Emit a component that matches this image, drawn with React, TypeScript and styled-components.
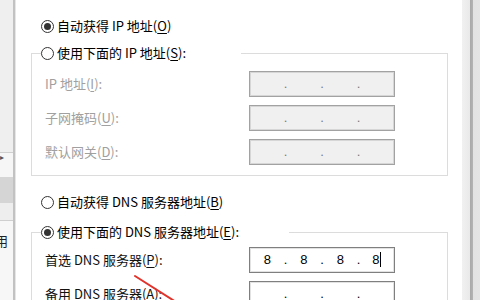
import React from "react";
import styled, { createGlobalStyle } from "styled-components";

const GlobalStyle = createGlobalStyle`
  html, body {
    margin: 0;
    padding: 0;
    background: #ffffff;
  }
  body {
    font-family: "Noto Sans CJK SC", "Microsoft YaHei", sans-serif;
    font-size: 13px;
    color: #000;
  }
`;

type Octets = [string, string, string, string];

type IpFieldProps = {
  value?: Octets;
  disabled?: boolean;
  focused?: boolean;
};

function IpField({ value, disabled, focused }: IpFieldProps) {
  const parts: Octets = value ?? ["", "", "", ""];
  return (
    <ScIpBox $disabled={disabled}>
      {parts.map((part, i) => (
        <React.Fragment key={i}>
          {i > 0 && <ScDot $disabled={disabled}>.</ScDot>}
          <ScOctet>
            {part}
            {focused && i === 3 && <ScCaret />}
          </ScOctet>
        </React.Fragment>
      ))}
    </ScIpBox>
  );
}

type RadioProps = {
  checked?: boolean;
  width?: number;
  children: React.ReactNode;
};

function Radio({ checked, width, children }: RadioProps) {
  return (
    <ScRadioRow $width={width}>
      <ScRadioCircle $checked={checked} />
      <span>{children}</span>
    </ScRadioRow>
  );
}

export default function App() {
  return (
    <>
      <GlobalStyle />
      <ScWindow>
        <ScLeftStrip>
          <ScStripBlock $height={152} />
          <ScStripLine />
          <ScStripArrow>▸</ScStripArrow>
          <ScStripBlock $height={14} $tone="#f6f6f6" />
          <ScStripBlock $height={26} $tone="#d5d5d5" />
          <ScStripBlock $height={17} $tone="#eeeeee" />
          <ScStripLine />
          <ScStripText>用</ScStripText>
        </ScLeftStrip>

        <ScMain>
          <ScStandalone>
            <Radio checked>
              自动获得 IP 地址(<u>O</u>)
            </Radio>
          </ScStandalone>

          <ScGroup $gap={7}>
            <ScLegend>
              <Radio width={200}>
                使用下面的 IP 地址(<u>S</u>):
              </Radio>
            </ScLegend>
            <ScGrid $padTop={8} $padBottom={10}>
              <ScLabel $disabled>
                IP 地址(<u>I</u>):
              </ScLabel>
              <IpField disabled />
              <ScLabel $disabled>
                子网掩码(<u>U</u>):
              </ScLabel>
              <IpField disabled />
              <ScLabel $disabled>
                默认网关(<u>D</u>):
              </ScLabel>
              <IpField disabled />
            </ScGrid>
          </ScGroup>

          <ScStandalone $gap={16}>
            <Radio>
              自动获得 DNS 服务器地址(<u>B</u>)
            </Radio>
          </ScStandalone>

          <ScGroup $gap={10}>
            <ScLegend>
              <Radio checked width={248}>
                使用下面的 DNS 服务器地址(<u>E</u>):
              </Radio>
            </ScLegend>
            <ScGrid $padTop={5} $padBottom={10}>
              <ScLabel>
                首选 DNS 服务器(<u>P</u>):
              </ScLabel>
              <IpField value={["8", "8", "8", "8"]} focused />
              <ScLabel>
                备用 DNS 服务器(<u>A</u>):
              </ScLabel>
              <IpField />
            </ScGrid>
          </ScGroup>
        </ScMain>

        <ScRightStrip />

        <ScAnnotation viewBox="0 0 480 300" width="480" height="300">
          <line
            x1="135"
            y1="276"
            x2="176"
            y2="302"
            stroke="#e2332b"
            strokeWidth="2"
            strokeLinecap="round"
          />
        </ScAnnotation>
      </ScWindow>
    </>
  );
}

const ScWindow = styled.div`
  position: relative;
  display: flex;
  width: 480px;
  height: 300px;
  overflow: hidden;
  background: #fff;
`;

const ScLeftStrip = styled.div`
  flex: none;
  width: 13px;
  display: flex;
  flex-direction: column;
  background: #f7f7f7;
  border-right: 2px solid #c2c2c2;
  box-shadow: 1px 0 0 #e6e6e6;
  overflow: hidden;
`;

const ScStripBlock = styled.div<{ $height: number; $tone?: string }>`
  flex: none;
  height: ${(p) => p.$height}px;
  background: ${(p) => p.$tone ?? "#efefef"};
`;

const ScStripLine = styled.div`
  flex: none;
  height: 1px;
  background: #cfcfcf;
`;

const ScStripArrow = styled.div`
  height: 10px;
  line-height: 10px;
  font-size: 8px;
  color: #555;
  background: #f6f6f6;
  font-family: "DejaVu Sans", sans-serif;
`;

const ScStripText = styled.div`
  margin: 12px 0 0 -5px;
  font-size: 13px;
  line-height: 16px;
  color: #222;
`;

const ScMain = styled.div`
  flex: 1;
  display: flex;
  flex-direction: column;
  padding: 16px 14px 0 16px;
  min-width: 0;
`;

const ScStandalone = styled.div<{ $gap?: number }>`
  margin-top: ${(p) => p.$gap ?? 0}px;
  padding-left: 10px;
`;

const ScRadioRow = styled.label<{ $width?: number }>`
  display: flex;
  align-items: center;
  gap: 3px;
  height: 20px;
  width: ${(p) => (p.$width ? `${p.$width}px` : "auto")};
  white-space: nowrap;
  line-height: 20px;
  color: #000;

  u {
    text-underline-offset: 2px;
  }
`;

const ScRadioCircle = styled.span<{ $checked?: boolean }>`
  flex: none;
  box-sizing: border-box;
  width: 13px;
  height: 13px;
  border: 1px solid #333;
  border-radius: 50%;
  background: #fff;
  display: flex;
  align-items: center;
  justify-content: center;

  &::after {
    content: "";
    width: 7px;
    height: 7px;
    border-radius: 50%;
    background: #333;
    display: ${(p) => (p.$checked ? "block" : "none")};
  }
`;

const ScGroup = styled.fieldset<{ $gap: number }>`
  margin: ${(p) => p.$gap}px 0 0 0;
  padding: 0;
  min-width: 0;
  border: 1px solid #dcdcdc;
`;

const ScLegend = styled.legend`
  margin-left: 9px;
  padding: 0;
`;

const ScGrid = styled.div<{ $padTop: number; $padBottom: number }>`
  display: grid;
  grid-template-columns: 204px 146px;
  row-gap: 8px;
  align-items: center;
  padding: ${(p) => p.$padTop}px 0 ${(p) => p.$padBottom}px 13px;
`;

const ScLabel = styled.span<{ $disabled?: boolean }>`
  white-space: nowrap;
  line-height: 20px;
  color: ${(p) => (p.$disabled ? "#a0a0a0" : "#111")};

  u {
    text-underline-offset: 2px;
  }
`;

const ScIpBox = styled.div<{ $disabled?: boolean }>`
  box-sizing: border-box;
  width: 146px;
  height: 26px;
  display: flex;
  align-items: center;
  padding: 0 1px;
  border: 1px solid ${(p) => (p.$disabled ? "#a2a2a2" : "#7f7f7f")};
  box-shadow: inset 0 0 0 1px ${(p) => (p.$disabled ? "#d6d6d6" : "#e2e2e2")};
  background: ${(p) => (p.$disabled ? "#f0f0f0" : "#fff")};
  font-family: "Liberation Sans", Arial, sans-serif;
  font-size: 13px;
  line-height: 16px;
  color: #000;
`;

const ScOctet = styled.span`
  flex: 1;
  text-align: center;
  white-space: nowrap;
`;

const ScDot = styled.span<{ $disabled?: boolean }>`
  flex: none;
  width: 4px;
  text-align: center;
  color: ${(p) => (p.$disabled ? "#7a7a7a" : "#000")};
`;

const ScCaret = styled.span`
  display: inline-block;
  width: 1px;
  height: 15px;
  margin-left: 1px;
  background: #000;
  vertical-align: -3px;
`;

const ScRightStrip = styled.div`
  flex: none;
  width: 18px;
  background: linear-gradient(
    to right,
    #f1f1f1 0,
    #e9e9e9 8px,
    #a8a8a8 8px,
    #b4b4b4 11px,
    #e2e2e2 11px,
    #e4e4e4 18px
  );
`;

const ScAnnotation = styled.svg`
  position: absolute;
  left: 0;
  top: 0;
  pointer-events: none;
`;
